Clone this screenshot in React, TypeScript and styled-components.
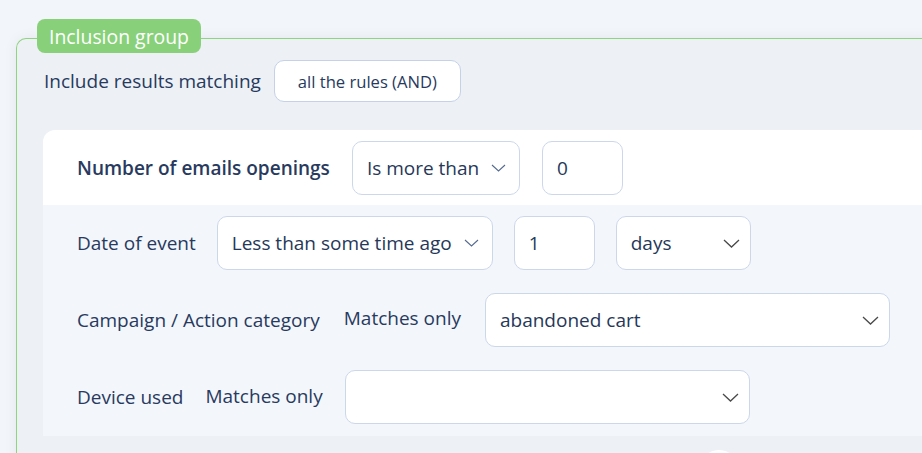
import React from 'react';
import styled, {createGlobalStyle} from 'styled-components';

const GlobalStyle = createGlobalStyle`
    html, body {
        margin: 0;
        padding: 0;
        overflow: hidden;
        background: #f2f5f9;
        font-family: 'Open Sans', 'Noto Sans', sans-serif;
        color: #283a5e;
    }
`;

const Page = styled.div`
    padding: 38px 0 0 16px;
    height: 453px;
    box-sizing: border-box;
`;

const Group = styled.div`
    position: relative;
    width: 960px;
    border: 1px solid #8fd480;
    border-right: none;
    border-top-left-radius: 10px;
    background: #edf1f5;
    box-shadow: 0 0 14px rgba(40, 60, 100, 0.06);
    padding: 21px 0 40px 26px;
`;

const Badge = styled.div`
    position: absolute;
    top: -20px;
    left: 20px;
    height: 34px;
    padding: 0 12px;
    display: flex;
    align-items: center;
    background: #88d17a;
    border-radius: 8px;
    color: #ffffff;
    font-size: 19.4px;
`;

const HeaderRow = styled.div`
    display: flex;
    align-items: center;
    gap: 13px;
    padding-left: 1px;
`;

const Text = styled.span<{$bold?: boolean; $lift?: number}>`
    font-size: 19px;
    font-weight: ${({$bold}) => ($bold ? 600 : 400)};
    white-space: nowrap;
    margin-top: ${({$lift}) => ($lift ? `-${$lift}px` : '0')};
`;

const ModeButton = styled.div`
    height: 42px;
    width: 187px;
    box-sizing: border-box;
    display: flex;
    align-items: center;
    justify-content: center;
    background: #ffffff;
    border: 1px solid #c4d1e8;
    border-radius: 10px;
    font-size: 16.6px;
`;

const Card = styled.div`
    margin-top: 28px;
    border-radius: 12px 12px 0 0;
    overflow: hidden;
`;

const CardHead = styled.div`
    display: flex;
    align-items: center;
    gap: 22px;
    height: 75px;
    padding-left: 34px;
    background: #ffffff;
`;

const CardBody = styled.div`
    display: flex;
    flex-direction: column;
    gap: 23px;
    padding: 11px 0 12px 34px;
    background: #f3f6fb;
`;

const Row = styled.div<{$gap?: number}>`
    display: flex;
    align-items: center;
    gap: ${({$gap}) => $gap ?? 22}px;
    height: 54px;
`;

const Field = styled.div<{$width: number}>`
    width: ${({$width}) => $width}px;
    height: 54px;
    box-sizing: border-box;
    display: flex;
    align-items: center;
    padding: 0 10px 0 14px;
    background: #ffffff;
    border: 1px solid #ccd7ea;
    border-radius: 10px;
    font-size: 19px;
    color: #263859;
    white-space: nowrap;
`;

const InlineChevron = styled.svg`
    margin-left: 12px;
    flex: none;
`;

const RightChevron = styled.svg`
    margin-left: auto;
    flex: none;
`;

const FooterButton = styled.div`
    width: 40px;
    height: 40px;
    border-radius: 50%;
    background: #ffffff;
    margin: 14px 0 0 656px;
`;

const SmallChevron = () => (
    <InlineChevron width="15" height="8" viewBox="0 0 15 8">
        <path d="M1 1 L7.5 7 L14 1" fill="none" stroke="#556b92" strokeWidth="1.1" />
    </InlineChevron>
);

const BigChevron = () => (
    <RightChevron width="17" height="9" viewBox="0 0 17 9">
        <path d="M1 1 L8.5 8 L16 1" fill="none" stroke="#4a4a4a" strokeWidth="1.3" />
    </RightChevron>
);

type SelectProps = {
    width: number;
    value?: string;
    inline?: boolean;
};

const Select = ({width, value, inline}: SelectProps) => (
    <Field $width={width}>
        {value}
        {inline ? <SmallChevron /> : <BigChevron />}
    </Field>
);

const App = () => (
    <>
        <GlobalStyle />
        <Page>
            <Group>
                <Badge>Inclusion group</Badge>
                <HeaderRow>
                    <Text>Include results matching</Text>
                    <ModeButton>all the rules (AND)</ModeButton>
                </HeaderRow>
                <Card>
                    <CardHead>
                        <Text $bold>Number of emails openings</Text>
                        <Select width={168} value="Is more than" inline />
                        <Field $width={81}>0</Field>
                    </CardHead>
                    <CardBody>
                        <Row $gap={21}>
                            <Text>Date of event</Text>
                            <Select width={276} value="Less than some time ago" inline />
                            <Field $width={81}>1</Field>
                            <Select width={135} value="days" />
                        </Row>
                        <Row $gap={24}>
                            <Text>Campaign / Action category</Text>
                            <Text $lift={4}>Matches only</Text>
                            <Select width={405} value="abandoned cart" />
                        </Row>
                        <Row>
                            <Text>Device used</Text>
                            <Text $lift={2}>Matches only</Text>
                            <Select width={405} />
                        </Row>
                    </CardBody>
                </Card>
                <FooterButton />
            </Group>
        </Page>
    </>
);

export default App;
